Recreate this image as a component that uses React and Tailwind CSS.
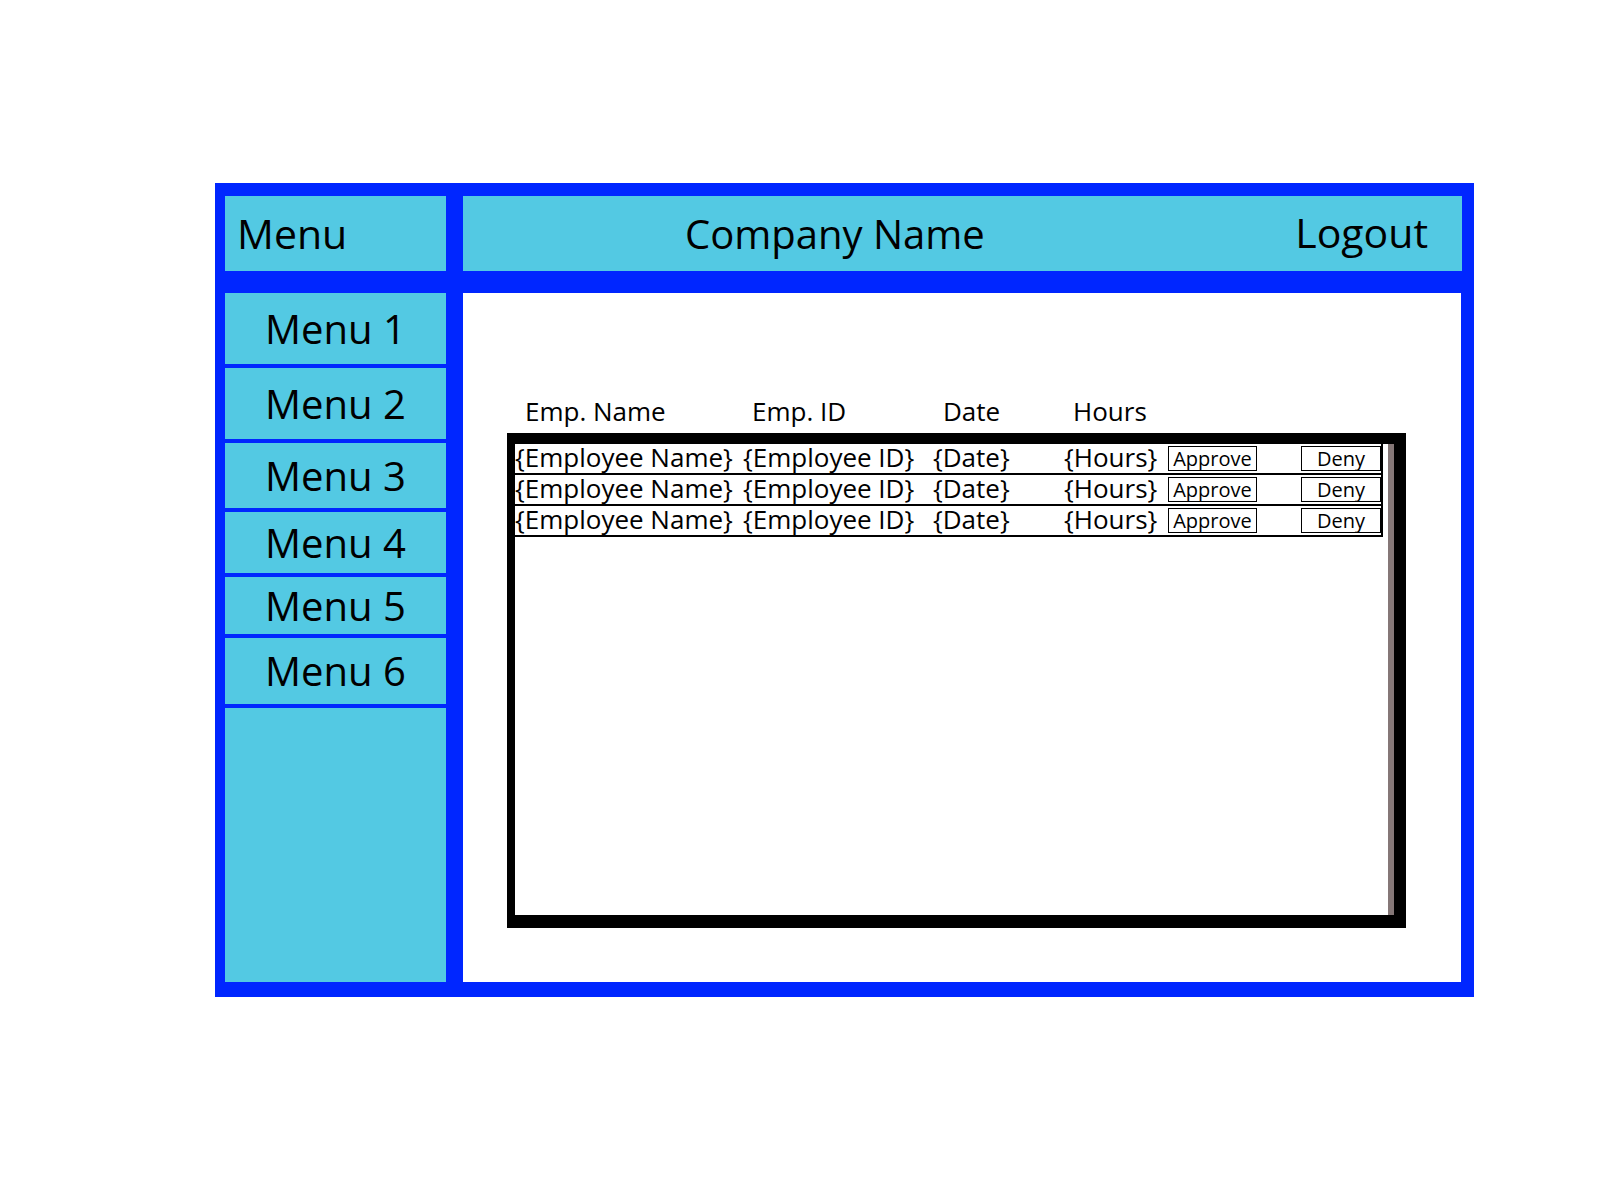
const menuItems = [
  { label: 'Menu 1', h: 'h-[71px]' },
  { label: 'Menu 2', h: 'h-[71px]' },
  { label: 'Menu 3', h: 'h-[65px]' },
  { label: 'Menu 4', h: 'h-[61px]' },
  { label: 'Menu 5', h: 'h-[57px]' },
  { label: 'Menu 6', h: 'h-[66px]' },
]

const rows = [
  { name: '{Employee Name}', id: '{Employee ID}', date: '{Date}', hours: '{Hours}' },
  { name: '{Employee Name}', id: '{Employee ID}', date: '{Date}', hours: '{Hours}' },
  { name: '{Employee Name}', id: '{Employee ID}', date: '{Date}', hours: '{Hours}' },
]

export default function App() {
  return (
    <div className="min-h-[1200px] w-full bg-white pt-[183px] pl-[215px] font-['Open_Sans',sans-serif] text-black">
      <div className="grid w-[1259px] grid-cols-[221px_999px] grid-rows-[75px_689px] gap-x-[17px] gap-y-[22px] bg-[#0026ff] pt-[13px] pl-[10px] pr-[12px] pb-[15px]">

        {/* Header */}
        <div className="flex items-center bg-[#53c9e3] pl-[12px]">
          <span className="text-[41px]">Menu</span>
        </div>
        <div className="flex items-center bg-[#53c9e3] pl-[222px] pr-[34px]">
          <span className="text-[40px]">Company Name</span>
          <span className="ml-auto -mt-[1px] text-[41px]">Logout</span>
        </div>

        {/* Sidebar */}
        <div className="flex flex-col gap-[4px]">
          {menuItems.map((item) => (
            <div key={item.label} className={`${item.h} flex items-center justify-center bg-[#53c9e3]`}>
              <span className="text-[40px]">{item.label}</span>
            </div>
          ))}
          <div className="flex-1 bg-[#53c9e3]" />
        </div>

        {/* Content */}
        <div className="mr-[1px] bg-white pt-[99px]">
          <div className="flex h-[36px] pl-[62px] text-[26px]">
            <span className="w-[227px]">Emp. Name</span>
            <span className="w-[191px]">Emp. ID</span>
            <span className="w-[130px]">Date</span>
            <span>Hours</span>
          </div>

          <div className="ml-[44px] mt-[5px] flex h-[495px] w-[899px] border-t-[11px] border-l-[8px] border-r-[12px] border-b-[13px] border-black bg-white">
            <div className="w-[873px]">
              {rows.map((row, i) => (
                <div key={i} className="flex h-[31px] w-[868px] items-center border-b-2 border-r-2 border-black text-[26px] leading-[29px]">
                  <span className="-mt-[2px] w-[228px] whitespace-nowrap">{row.name}</span>
                  <span className="-mt-[2px] w-[190px] whitespace-nowrap">{row.id}</span>
                  <span className="-mt-[2px] w-[131px]">{row.date}</span>
                  <span className="-mt-[2px] w-[104px]">{row.hours}</span>
                  <button className="flex h-[25px] w-[89px] items-center justify-center border border-black text-[20px] leading-none">
                    Approve
                  </button>
                  <button className="ml-[44px] flex h-[25px] w-[80px] items-center justify-center border border-black text-[20px] leading-none">
                    Deny
                  </button>
                </div>
              ))}
            </div>
            <div className="w-[6px] bg-[#857777]" />
          </div>
        </div>

      </div>
    </div>
  )
}
